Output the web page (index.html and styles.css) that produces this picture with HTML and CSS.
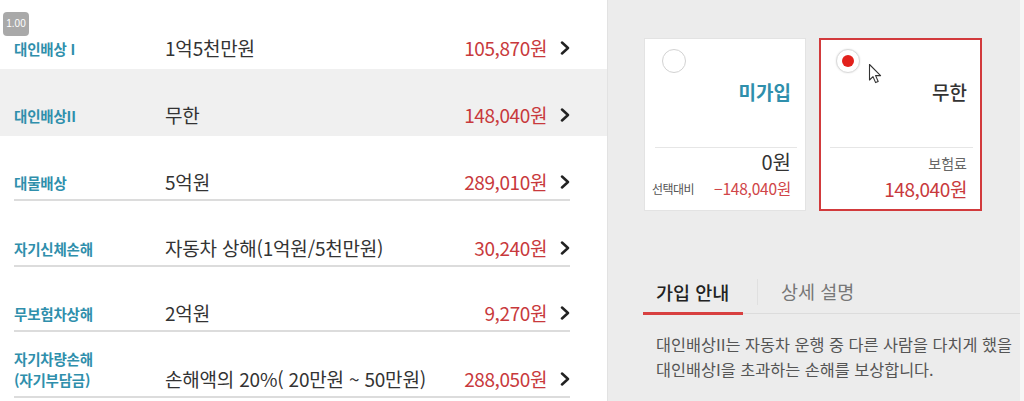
FILE: index.html
```html
<!DOCTYPE html>
<html lang="ko">
<head>
<meta charset="utf-8">
<title>보험 담보</title>
<link rel="stylesheet" href="styles.css">
</head>
<body>
<div class="screen">
  <div class="left">
    <div class="badge">1.00</div>
    <div class="band band-1">
      <div class="row">
        <div class="label">대인배상 I</div>
        <div class="value">1억5천만원</div>
        <div class="price">105,870원</div>
        <svg class="chev" width="10" height="14" viewBox="0 0 10 14"><path d="M2 1.5 L8 7 L2 12.5" fill="none" stroke="#222" stroke-width="2.5" stroke-linecap="round" stroke-linejoin="round"/></svg>
      </div>
    </div>
    <div class="band band-2">
      <div class="row">
        <div class="label">대인배상II</div>
        <div class="value">무한</div>
        <div class="price">148,040원</div>
        <svg class="chev" width="10" height="14" viewBox="0 0 10 14"><path d="M2 1.5 L8 7 L2 12.5" fill="none" stroke="#222" stroke-width="2.5" stroke-linecap="round" stroke-linejoin="round"/></svg>
      </div>
    </div>
    <div class="band">
      <div class="row line">
        <div class="label">대물배상</div>
        <div class="value">5억원</div>
        <div class="price">289,010원</div>
        <svg class="chev" width="10" height="14" viewBox="0 0 10 14"><path d="M2 1.5 L8 7 L2 12.5" fill="none" stroke="#222" stroke-width="2.5" stroke-linecap="round" stroke-linejoin="round"/></svg>
      </div>
    </div>
    <div class="band">
      <div class="row line r66">
        <div class="label">자기신체손해</div>
        <div class="value">자동차 상해(1억원/5천만원)</div>
        <div class="price">30,240원</div>
        <svg class="chev" width="10" height="14" viewBox="0 0 10 14"><path d="M2 1.5 L8 7 L2 12.5" fill="none" stroke="#222" stroke-width="2.5" stroke-linecap="round" stroke-linejoin="round"/></svg>
      </div>
    </div>
    <div class="band">
      <div class="row line">
        <div class="label">무보험차상해</div>
        <div class="value">2억원</div>
        <div class="price">9,270원</div>
        <svg class="chev" width="10" height="14" viewBox="0 0 10 14"><path d="M2 1.5 L8 7 L2 12.5" fill="none" stroke="#222" stroke-width="2.5" stroke-linecap="round" stroke-linejoin="round"/></svg>
      </div>
    </div>
    <div class="band">
      <div class="row line r66">
        <div class="label">자기차량손해<br>(자기부담금)</div>
        <div class="value">손해액의 20%( 20만원 ~ 50만원)</div>
        <div class="price">288,050원</div>
        <svg class="chev" width="10" height="14" viewBox="0 0 10 14"><path d="M2 1.5 L8 7 L2 12.5" fill="none" stroke="#222" stroke-width="2.5" stroke-linecap="round" stroke-linejoin="round"/></svg>
      </div>
    </div>
  </div>

  <div class="right">
    <div class="cards">
      <div class="card">
        <div class="radio"></div>
        <div class="card-title teal">미가입</div>
        <div class="card-div"></div>
        <div class="card-amount">0원</div>
        <div class="card-diff"><span class="diff-label">선택대비</span><span class="diff-val">−148,040원</span></div>
      </div>
      <div class="card selected">
        <div class="radio on"><span class="dot"></span></div>
        <svg class="cursor" width="16" height="22" viewBox="0 0 16 22"><path d="M1.5 1.5 L1.5 17 L5 13.6 L7.6 19.6 L10.2 18.5 L7.6 12.6 L12.6 12.6 Z" fill="#fff" stroke="#333" stroke-width="1.1" stroke-linejoin="round"/></svg>
        <div class="card-title">무한</div>
        <div class="card-div"></div>
        <div class="card-sub">보험료</div>
        <div class="card-price">148,040원</div>
      </div>
    </div>

    <div class="tabs">
      <div class="tab active">가입 안내</div>
      <div class="tab-sep"></div>
      <div class="tab">상세 설명</div>
    </div>
    <p class="desc">대인배상II는 자동차 운행 중 다른 사람을 다치게 했을<br>대인배상I을 초과하는 손해를 보상합니다.</p>
  </div>
  <div class="edge"></div>
</div>
</body>
</html>
```

FILE: styles.css
```css
* { box-sizing: border-box; }

html, body {
  margin: 0;
  padding: 0;
  background: #ececec;
}

body {
  font-family: "Noto Sans CJK KR", "Noto Sans", sans-serif;
  color: #333;
}

.screen {
  display: flex;
  width: 1024px;
  height: 401px;
  overflow: hidden;
}

/* ---------- left list ---------- */
.left {
  position: relative;
  width: 608px;
  flex: none;
  background: #fff;
  border-right: 1px solid #e2e2e2;
}

.badge {
  position: absolute;
  left: 3px;
  top: 12px;
  width: 26px;
  height: 24px;
  border-radius: 4px;
  background: #a9a9a9;
  color: #fff;
  font-family: "Liberation Sans", sans-serif;
  font-size: 10px;
  line-height: 24px;
  text-align: center;
}

.band {
  padding: 0 37px 0 14px;
}

.band-2 {
  background: #f0f0f0;
}

.row {
  display: flex;
  align-items: flex-end;
  height: 65px;
  padding-bottom: 10px;
}

.band-1 .row { height: 69px; padding-bottom: 10px; }
.band-2 .row { height: 67px; padding-bottom: 10px; }

.row.line {
  border-bottom: 2px solid #dcdcdc;
  padding-bottom: 6px;
}

.row.r66 { height: 66px; }

.label {
  width: 151px;
  flex: none;
  font-size: 14.5px;
  font-weight: 700;
  color: #2f8fac;
  line-height: 21px;
  letter-spacing: -0.2px;
  white-space: nowrap;
}

.value {
  flex: 1;
  font-size: 19px;
  color: #333;
  line-height: 22px;
  letter-spacing: -0.2px;
  white-space: nowrap;
}

.price {
  font-size: 19px;
  color: #c8393c;
  line-height: 22px;
  letter-spacing: -0.4px;
  white-space: nowrap;
}

.chev {
  flex: none;
  margin: 0 0 4px 13px;
}

/* ---------- right panel ---------- */
.right {
  flex: 1;
  padding: 38px 0 0 35px;
  background: #ececec;
}

.cards {
  display: flex;
  gap: 13px;
  padding-left: 1px;
}

.card {
  position: relative;
  width: 162px;
  height: 173px;
  background: #fff;
  border: 1px solid #e3e3e3;
  display: flex;
  flex-direction: column;
  align-items: flex-end;
  padding: 10px 14px 0 10px;
}

.card.selected {
  width: 163px;
  border: 2px solid #d23a3c;
  padding: 9px 13px 0 9px;
}

.radio {
  align-self: flex-start;
  width: 24px;
  height: 24px;
  border-radius: 50%;
  border: 1px solid #d2d2d2;
  background: #fff;
  margin-left: 7px;
  display: flex;
  align-items: center;
  justify-content: center;
}

.radio.on {
  margin-left: 6px;
  border-color: #dadada;
  box-shadow: 0 0 2px rgba(0,0,0,0.12);
}

.dot {
  width: 12px;
  height: 12px;
  border-radius: 50%;
  background: #e2211c;
}

.cursor {
  position: absolute;
  left: 47px;
  top: 23px;
}

.card-title {
  margin-top: 7px;
  font-size: 19px;
  line-height: 24px;
  font-weight: 500;
  color: #333;
}

.card-title.teal {
  color: #2f8fac;
  font-weight: 700;
}

.card-div {
  align-self: stretch;
  height: 1px;
  background: #e6e6e6;
  margin: 43px -6px 0 0;
}

.card-amount {
  margin-top: 1px;
  font-size: 20px;
  line-height: 26px;
  color: #333;
}

.card-diff {
  align-self: stretch;
  display: flex;
  justify-content: space-between;
  align-items: center;
  margin-top: 2px;
  margin-left: -3px;
}

.diff-label {
  font-size: 12px;
  color: #555;
  letter-spacing: -0.5px;
}

.diff-val {
  font-size: 15.5px;
  color: #d04548;
  letter-spacing: -0.2px;
}

.card-sub {
  margin-top: 5px;
  font-size: 14px;
  line-height: 20px;
  color: #666;
}

.card-price {
  margin-top: 4px;
  font-size: 19px;
  line-height: 24px;
  color: #c8393c;
  letter-spacing: -0.4px;
}

/* ---------- tabs ---------- */
.tabs {
  display: flex;
  align-items: center;
  margin-top: 60px;
  height: 43px;
  border-bottom: 1px solid #dcdcdc;
}

.tab {
  height: 43px;
  line-height: 40px;
  font-size: 18.5px;
  color: #777;
  padding: 0 0 0 23px;
  white-space: nowrap;
}

.tab.active {
  width: 100px;
  padding-left: 13px;
  color: #222;
  font-weight: 500;
  border-bottom: 3px solid #d84040;
  margin-bottom: -2px;
}

.tab-sep {
  width: 1px;
  height: 26px;
  background: #e0e0e0;
  margin-left: 14px;
}

.desc {
  margin: 18px 0 0 13px;
  font-size: 16.3px;
  line-height: 25px;
  color: #555;
  white-space: nowrap;
}

.edge {
  width: 4px;
  flex: none;
  background: #f6f6f6;
}
```
